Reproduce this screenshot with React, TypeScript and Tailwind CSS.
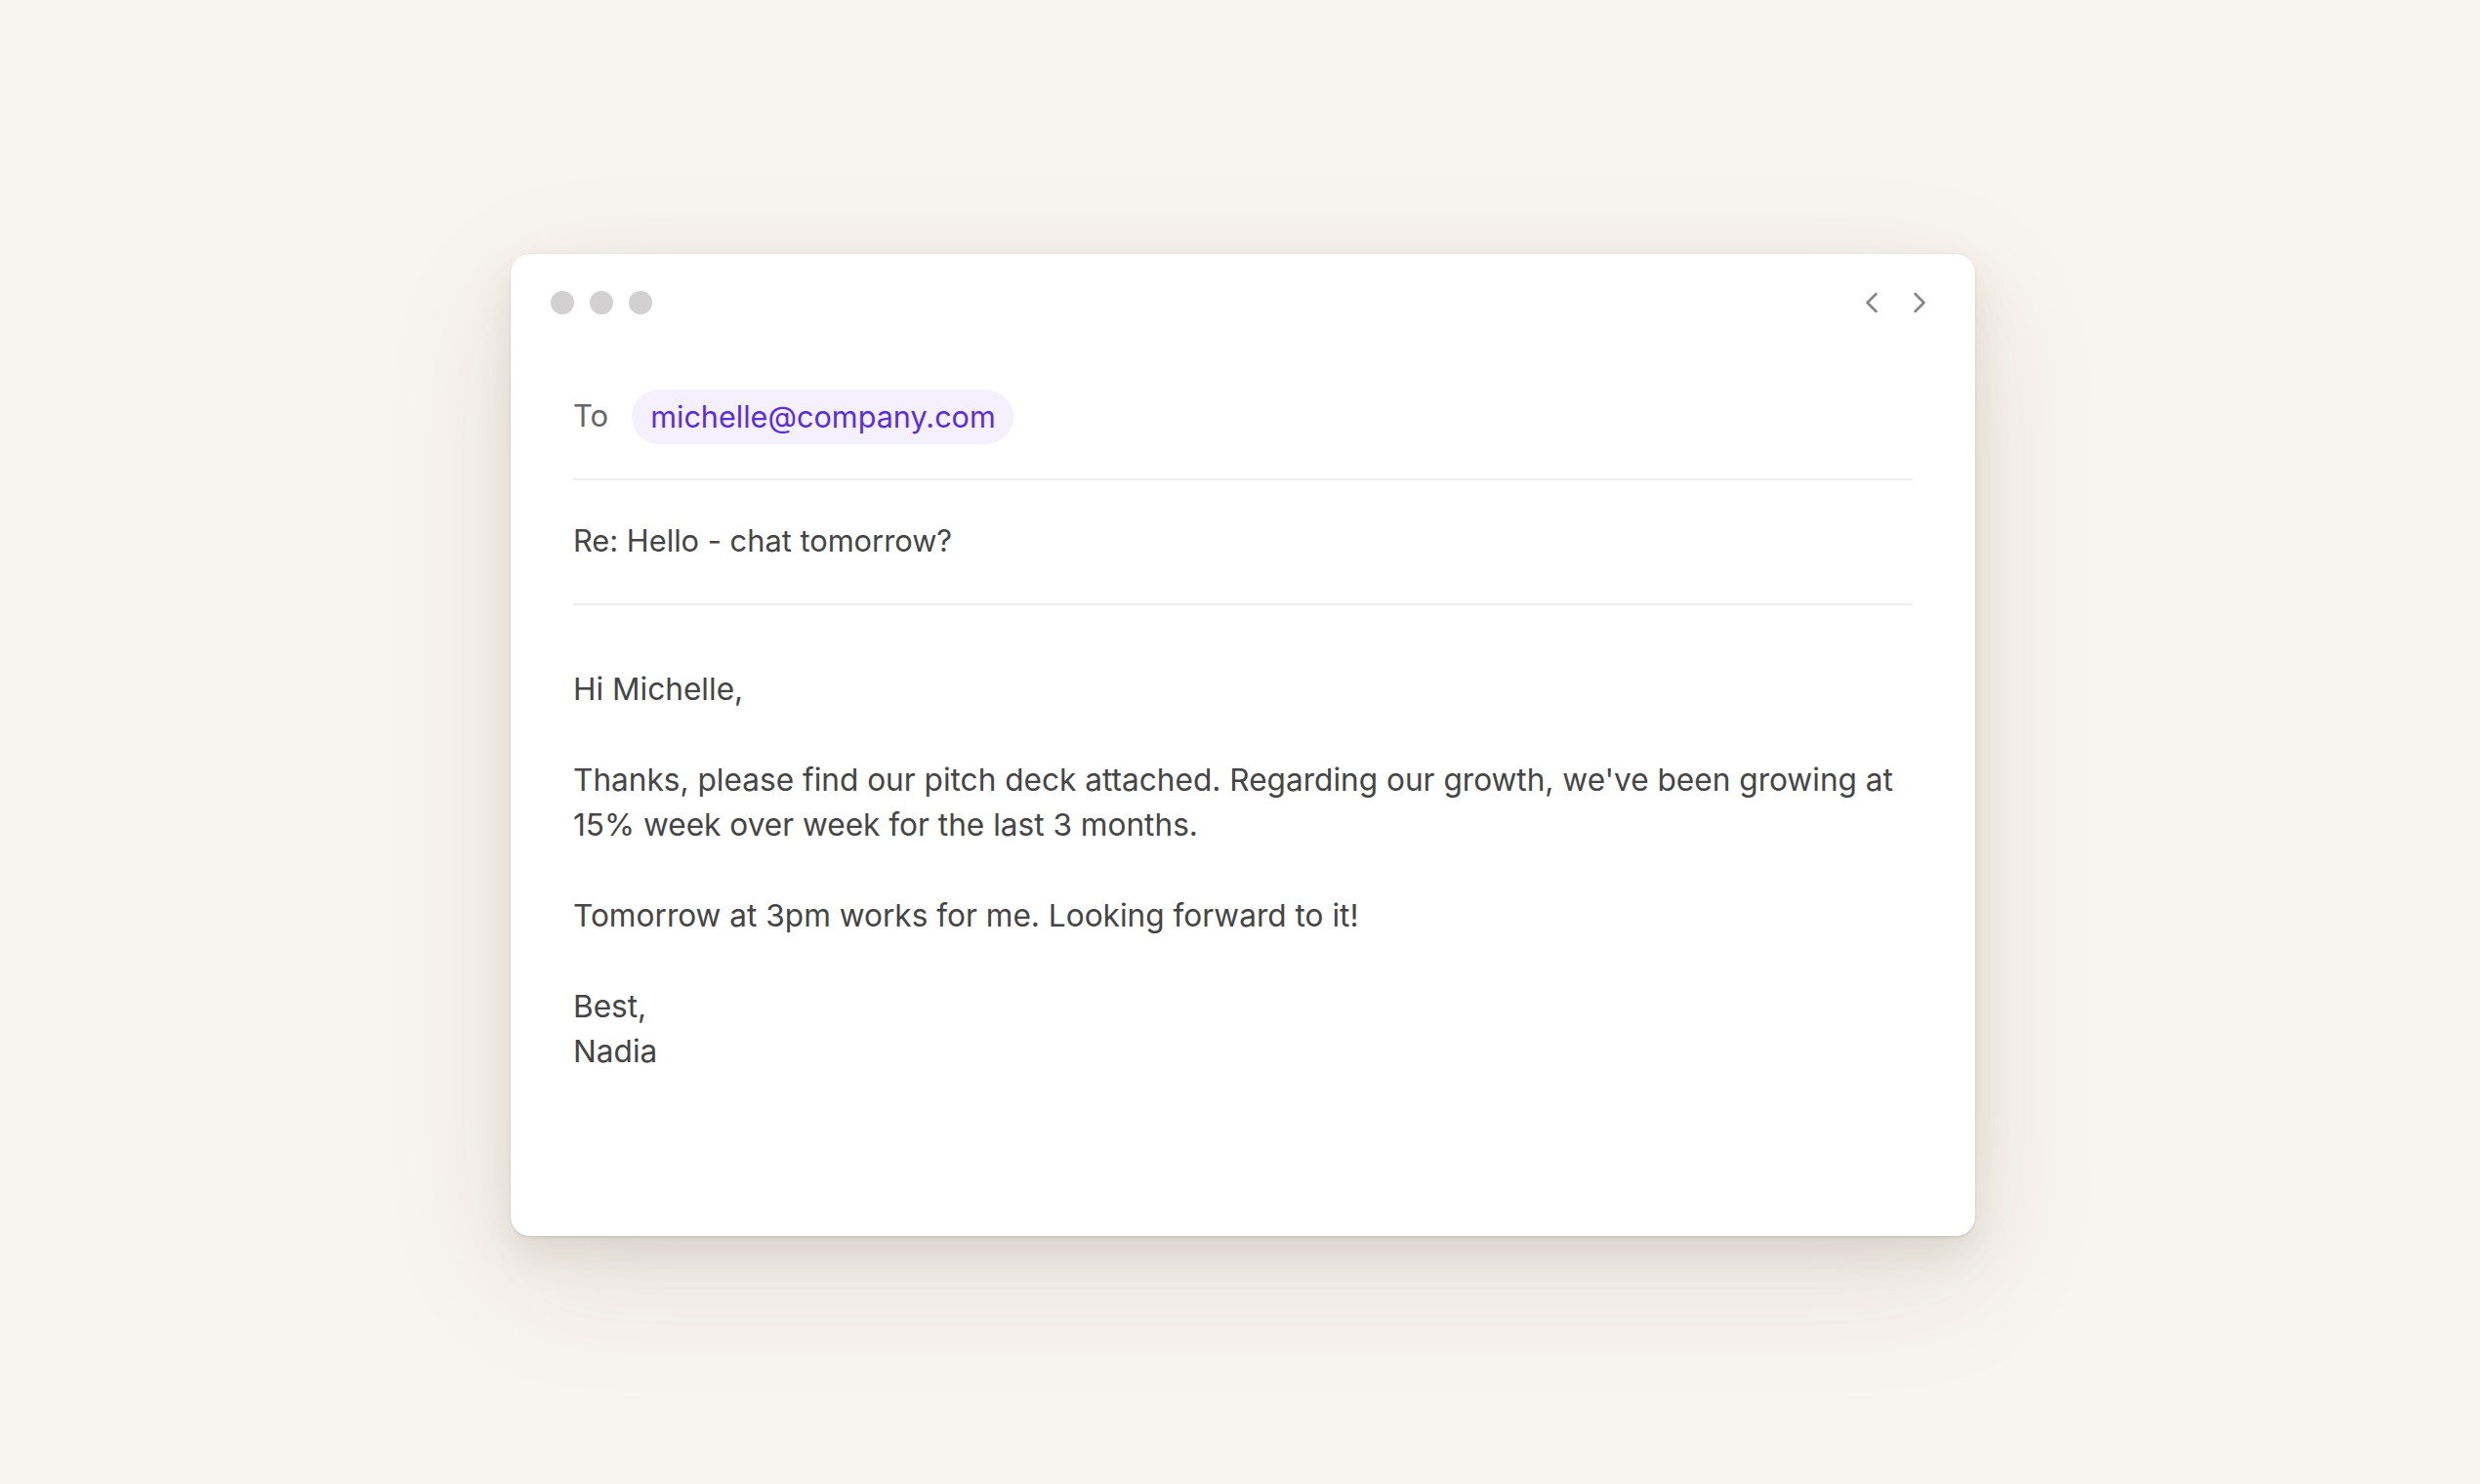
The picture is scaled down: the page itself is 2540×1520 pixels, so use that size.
import { ChevronLeft, ChevronRight } from 'lucide-react';

export default function App() {
  return (
    <div className="min-h-screen w-full bg-[#f8f4ee] flex items-center justify-center pl-[6px] pt-[5px] font-['Inter',sans-serif]">
      <div className="w-[1500px] h-[1006px] bg-white rounded-[20px] flex flex-col shadow-[0_0_0_1px_rgba(0,0,0,0.03),0_2px_3px_rgba(0,0,0,0.08),0_20px_40px_rgba(70,60,40,0.10),0_40px_140px_rgba(70,60,40,0.10)]">
        {/* Window bar */}
        <div className="flex items-center justify-between h-[24px] mt-[38px] pl-[41px] pr-[39px]">
          <div className="flex gap-4">
            <span className="w-6 h-6 rounded-full bg-[#d2d0d0]" />
            <span className="w-6 h-6 rounded-full bg-[#d2d0d0]" />
            <span className="w-6 h-6 rounded-full bg-[#d2d0d0]" />
          </div>
          <div className="flex items-center gap-[13px] text-[#858585]">
            <ChevronLeft size={36} strokeWidth={1.7} />
            <ChevronRight size={36} strokeWidth={1.7} />
          </div>
        </div>

        <div className="px-16 flex flex-col">
          {/* Recipient */}
          <div className="flex items-center gap-[24px] pt-[77px] pb-[35px] border-b-2 border-[#ededed]">
            <span className="text-[31px] text-[#666666]">To</span>
            <span className="h-[56px] flex items-center rounded-full bg-[#f4f0fe] pl-[19px] pr-[18px] text-[30.6px] text-[#5b2fd5]">
              michelle@company.com
            </span>
          </div>

          {/* Subject */}
          <div className="h-[128px] flex items-center border-b-2 border-[#ededed]">
            <span className="text-[30.8px] text-[#454545]">Re: Hello - chat tomorrow?</span>
          </div>

          {/* Body */}
          <div className="pt-[63px] text-[31.6px] leading-[46px] text-[#454545]">
            <p className="mb-[47px]">Hi Michelle,</p>
            <p className="mb-[47px]">
              Thanks, please find our pitch deck attached. Regarding our growth, we've been growing at
              <br />
              15% week over week for the last 3 months.
            </p>
            <p className="mb-[47px]">Tomorrow at 3pm works for me. Looking forward to it!</p>
            <p>
              Best,
              <br />
              Nadia
            </p>
          </div>
        </div>
      </div>
    </div>
  );
}
